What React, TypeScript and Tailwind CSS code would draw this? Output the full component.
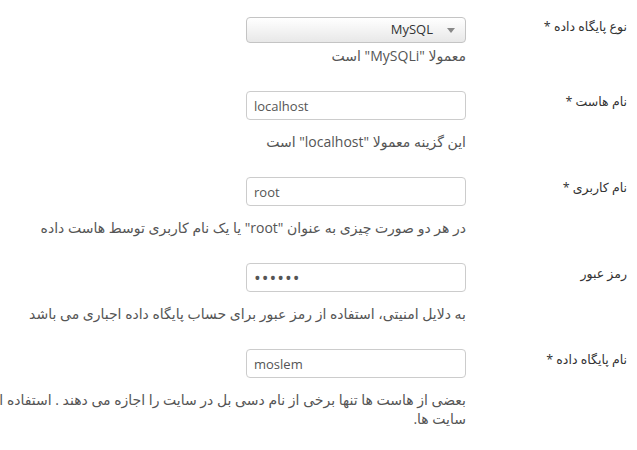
const font = { fontFamily: '"Open Sans", "DejaVu Sans", sans-serif' }

type Field = {
    label: string
    required?: boolean
    value: string
    kind?: 'select' | 'text' | 'password'
    help: React.ReactNode
}

const fields: Field[] = [
    { label: 'نوع پایگاه داده', required: true, value: 'MySQL', kind: 'select', help: 'معمولا "MySQLi" است' },
    { label: 'نام هاست', required: true, value: 'localhost', help: 'این گزینه معمولا "localhost" است' },
    { label: 'نام کاربری', required: true, value: 'root', help: 'در هر دو صورت چیزی به عنوان "root" یا یک نام کاربری توسط هاست داده' },
    { label: 'رمز عبور', value: '123456', kind: 'password', help: 'به دلایل امنیتی، استفاده از رمز عبور برای حساب پایگاه داده اجباری می باشد' },
    {
        label: 'نام پایگاه داده ',
        required: true,
        value: 'moslem',
        help: (
            <>
                بعضی از هاست ها تنها برخی از نام دسی بل در سایت را اجازه می دهند . استفاده از پیشوند جدول برای تمایز بین داده های
                <br />
                سایت ها.
            </>
        ),
    },
]

function SelectBox({ value }: { value: string }) {
    return (
        <div dir="ltr" className="flex h-[26px] w-[220px] items-center justify-end rounded-[4px] border border-[#c4c4c4] bg-gradient-to-b from-white to-[#e8e8e8] pr-[10px] text-[13px] text-[#333]">
            <span className="mr-[14px]">{value}</span>
            <svg width="8" height="5" viewBox="0 0 8 5"><path d="M0 0h8L4 5z" fill="#888" /></svg>
        </div>
    )
}

export default function App() {
    return (
        <div dir="rtl" style={font} className="min-h-[450px] overflow-hidden bg-white pr-[10px] pt-[17px] text-[#333]">
            {fields.map((f) => (
                <div key={f.label} className="mb-[26px] flex">
                    <label className={`w-[161px] shrink-0 text-[12.5px] leading-[18px] ${f.kind === 'select' ? 'pt-[1px]' : 'pt-[2px]'}`}>
                        {f.label}{f.required && ' *'}
                    </label>
                    <div className="min-w-0 flex-1">
                        {f.kind === 'select' ? (
                            <SelectBox value={f.value} />
                        ) : (
                            <input
                                dir="ltr"
                                readOnly
                                type={f.kind === 'password' ? 'password' : 'text'}
                                value={f.value}
                                className={`block h-[29px] w-[220px] rounded-[4px] border border-[#cccccc] bg-white px-[7px] text-[#555] outline-none ${f.kind === 'password' ? 'text-[18px] tracking-[1px]' : 'text-[13px]'}`}
                            />
                        )}
                        <p className={`w-[900px] text-[14px] leading-[19px] text-[#555] ${f.kind === 'select' ? 'mt-[3px]' : 'mt-[12px]'}`}>
                            {f.help}
                        </p>
                    </div>
                </div>
            ))}
        </div>
    )
}
